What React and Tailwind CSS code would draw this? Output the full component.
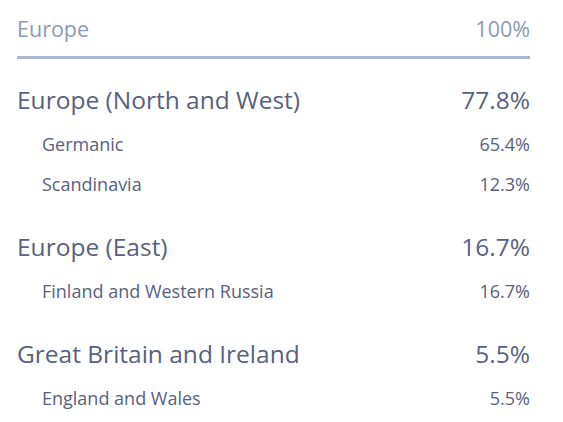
export default function App() {
  const groups = [
    { name: "Europe (North and West)", pct: "77.8%", subs: [["Germanic", "65.4%"], ["Scandinavia", "12.3%"]] },
    { name: "Europe (East)", pct: "16.7%", subs: [["Finland and Western Russia", "16.7%"]] },
    { name: "Great Britain and Ireland", pct: "5.5%", subs: [["England and Wales", "5.5%"]] },
  ];
  return (
    <div className="w-[563px] h-[422px] bg-white font-['Open_Sans',sans-serif] text-[#58617e]">
      <div className="ml-[17px] w-[513px] pt-[14px]">
        <div className="flex justify-between text-[21.5px] leading-[30px] text-[#8e99b4] pb-[12px] border-b-[3px] border-[#aab7cd]">
          <span>Europe</span>
          <span>100%</span>
        </div>
        {groups.map((g, i) => (
          <div key={g.name} className={i === 0 ? "mt-[24px]" : "mt-[26px]"}>
            <div className="flex justify-between text-[24.5px] leading-[34px]">
              <span>{g.name}</span>
              <span>{g.pct}</span>
            </div>
            <div className="mt-[7px]">
              {g.subs.map(([n, p]) => (
                <div key={n} className="flex justify-between text-[18px] leading-[40px] pl-[25px]">
                  <span>{n}</span>
                  <span>{p}</span>
                </div>
              ))}
            </div>
          </div>
        ))}
      </div>
    </div>
  );
}
